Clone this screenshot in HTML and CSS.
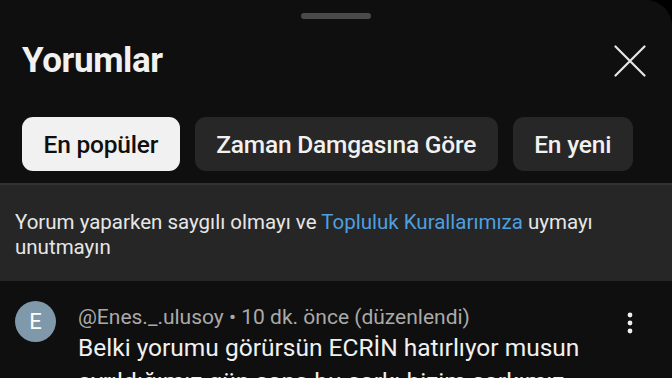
FILE: index.html
```html
<!DOCTYPE html>
<html lang="tr">
<head>
  <meta charset="UTF-8">
  <meta name="viewport" content="width=device-width, initial-scale=1.0">
  <title>Yorumlar</title>
  <link rel="stylesheet" href="styles.css">
</head>
<body>
  <div class="sheet">
    <div class="handle-row"><div class="handle"></div></div>
    <div class="header">
      <h1 class="title">Yorumlar</h1>
      <button class="close-btn" aria-label="Kapat">
        <svg width="32" height="32" viewBox="0 0 32 32">
          <path d="M1.5 1.5 L30.5 30.5 M30.5 1.5 L1.5 30.5" stroke="#e6e6e6" stroke-width="2.2" stroke-linecap="round" fill="none"/>
        </svg>
      </button>
    </div>
    <div class="chips">
      <button class="chip active">En popüler</button>
      <button class="chip">Zaman Damgasına Göre</button>
      <button class="chip">En yeni</button>
    </div>
    <div class="notice">
      Yorum yaparken saygılı olmayı ve <a href="#" class="link">Topluluk Kurallarımıza</a> uymayı unutmayın
    </div>
    <div class="comment">
      <div class="avatar">E</div>
      <div class="comment-body">
        <div class="meta">@Enes._.ulusoy • 10 dk. önce (düzenlendi)</div>
        <div class="text">Belki yorumu görürsün ECRİN hatırlıyor musun ayrıldığımız gün sana bu şarkı bizim şarkımız</div>
      </div>
      <button class="more-btn" aria-label="Diğer">
        <svg width="6" height="22" viewBox="0 0 6 22">
          <circle cx="3" cy="3" r="2.4" fill="#eee"/>
          <circle cx="3" cy="11" r="2.4" fill="#eee"/>
          <circle cx="3" cy="19" r="2.4" fill="#eee"/>
        </svg>
      </button>
    </div>
  </div>
</body>
</html>
```

FILE: styles.css
```css
* {
  box-sizing: border-box;
}
html, body {
  margin: 0;
  height: 100%;
  background: #000;
  overflow: hidden;
}
body {
  font-family: Roboto, "Noto Sans", sans-serif;
  color: #f1f1f1;
}
.sheet {
  background: #0f0f0f;
  min-height: 100%;
  border-top-right-radius: 26px;
}
.handle-row {
  display: flex;
  justify-content: center;
  padding-top: 13px;
}
.handle {
  width: 70px;
  height: 6px;
  border-radius: 3px;
  background: #4a4a4a;
}
.header {
  display: flex;
  align-items: center;
  justify-content: space-between;
  padding: 22px 26px 0 22px;
}
.title {
  margin: 0;
  font-size: 35px;
  line-height: 40px;
  font-weight: 700;
  letter-spacing: -0.4px;
  color: #f1f1f1;
}
.close-btn {
  background: none;
  border: 0;
  padding: 0;
  display: flex;
}
.chips {
  display: flex;
  gap: 15px;
  padding: 36px 22px 0;
}
.chip {
  height: 54px;
  padding: 0 21.5px;
  border: 0;
  border-radius: 11px;
  background: #272727;
  color: #f1f1f1;
  font-family: Roboto, "Noto Sans", sans-serif;
  font-size: 24.5px;
  font-weight: 500;
  letter-spacing: -0.2px;
}
.chip.active {
  background: #f1f1f1;
  color: #0f0f0f;
}
.notice {
  margin-top: 12px;
  background: #262626;
  border-top: 2px solid #333;
  padding: 25px 15px 21px;
  font-size: 20.5px;
  line-height: 25px;
  color: #e6e6e6;
}
.link {
  color: #4e9fe0;
  text-decoration: none;
}
.comment {
  display: flex;
  align-items: flex-start;
  padding: 20px 39px 0 15px;
  gap: 22px;
}
.avatar {
  flex: none;
  width: 41px;
  height: 41px;
  border-radius: 50%;
  background: #7f99aa;
  color: #fff;
  display: flex;
  align-items: center;
  justify-content: center;
  font-size: 22px;
}
.comment-body {
  flex: 1;
  padding-top: 5px;
}
.meta {
  font-size: 21px;
  color: #aaa;
  line-height: 22px;
}
.text {
  margin-top: 3px;
  font-size: 24.5px;
  line-height: 34px;
  color: #f1f1f1;
}
.more-btn {
  background: none;
  border: 0;
  padding: 0;
  margin-top: 11px;
  display: flex;
}
```
